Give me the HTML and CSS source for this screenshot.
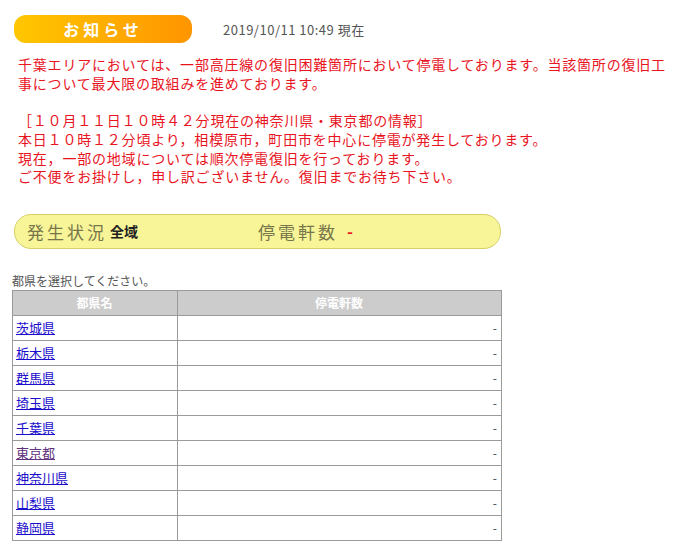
FILE: index.html
```html
<!DOCTYPE html>
<html lang="ja">
<head>
  <meta charset="UTF-8">
  <title>停電情報</title>
  <link rel="stylesheet" href="styles.css">
</head>
<body>

<div class="page">
  <div class="notice-head">
    <div class="badge">お知らせ</div>
    <div class="updated">2019/10/11 10:49 現在</div>
  </div>

  <p class="notice">千葉エリアにおいては、一部高圧線の復旧困難箇所において停電しております。当該箇所の復旧工事について最大限の取組みを進めております。<br>
  <br>
  ［１０月１１日１０時４２分現在の神奈川県・東京都の情報］<br>
  本日１０時１２分頃より，相模原市，町田市を中心に停電が発生しております。<br>
  現在，一部の地域については順次停電復旧を行っております。<br>
  ご不便をお掛けし，申し訳ございません。復旧までお待ち下さい。</p>

  <div class="status">
    <span class="status-label">発生状況</span>
    <span class="status-area">全域</span>
    <span class="status-label count-label">停電軒数</span>
    <span class="status-count">-</span>
  </div>

  <p class="select-msg">都県を選択してください。</p>

  <table class="area-table">
    <thead>
      <tr>
        <th class="col-name">都県名</th>
        <th>停電軒数</th>
      </tr>
    </thead>
    <tbody>
      <tr><td><a href="#">茨城県</a></td><td class="num">-</td></tr>
      <tr><td><a href="#">栃木県</a></td><td class="num">-</td></tr>
      <tr><td><a href="#">群馬県</a></td><td class="num">-</td></tr>
      <tr><td><a href="#">埼玉県</a></td><td class="num">-</td></tr>
      <tr><td><a href="#">千葉県</a></td><td class="num">-</td></tr>
      <tr><td><a href="#" class="visited">東京都</a></td><td class="num">-</td></tr>
      <tr><td><a href="#">神奈川県</a></td><td class="num">-</td></tr>
      <tr><td><a href="#">山梨県</a></td><td class="num">-</td></tr>
      <tr><td><a href="#">静岡県</a></td><td class="num">-</td></tr>
    </tbody>
  </table>
</div>

</body>
</html>
```

FILE: styles.css
```css
body {
  margin: 0;
  background: #fff;
  font-family: "Noto Sans CJK JP", "Noto Sans", sans-serif;
  color: #333;
}

.page {
  padding: 15px 0 0 12px;
}

/* header: badge + timestamp */
.notice-head {
  display: flex;
  align-items: center;
  margin-left: 2px;
}

.badge {
  width: 178px;
  height: 28px;
  line-height: 28px;
  border-radius: 12px;
  background: linear-gradient(to right, #ffc700, #ff9500);
  color: #fff;
  font-weight: bold;
  font-size: 16px;
  letter-spacing: 4px;
  text-align: center;
}

.updated {
  margin-left: 31px;
  font-size: 13px;
  letter-spacing: 0.5px;
  color: #555;
}

.notice {
  margin: 12px 0 0 6px;
  width: 657px;
  font-size: 14px;
  line-height: 18.7px;
  letter-spacing: 0.8px;
  color: #e8141e;
}

/* summary bar */
.status {
  display: flex;
  align-items: center;
  box-sizing: border-box;
  width: 487px;
  height: 35px;
  margin: 28px 0 0 2px;
  padding-left: 12px;
  background: #f8f598;
  border: 1px solid #d6cf66;
  border-radius: 17px;
}

.status-label {
  font-size: 17px;
  letter-spacing: 3px;
  color: #76764a;
}

.status-area {
  margin-left: 3px;
  font-size: 14px;
  font-weight: bold;
  color: #222;
}

.count-label {
  margin-left: 120px;
}

.status-count {
  margin-left: 9px;
  font-weight: bold;
  font-size: 16px;
  color: #e8141e;
}

.select-msg {
  margin: 23px 0 0 0;
  font-size: 12px;
  line-height: 18px;
  color: #555;
}

/* prefecture list */
.area-table {
  width: 490px;
  border-collapse: collapse;
  font-size: 13px;
}

.area-table th,
.area-table td {
  height: 24px;
  padding: 0 4px 0 3px;
  border: 1px solid #9a9a9a;
}

.area-table th {
  background: #cccccc;
  color: #fff;
  font-size: 12px;
  font-weight: bold;
  text-align: center;
}

.col-name {
  width: 157px;
}

.area-table a {
  color: #1a0dcc;
}

.area-table a.visited {
  color: #60307a;
}

.num {
  text-align: right;
  font-size: 12px;
  color: #444;
}
```
